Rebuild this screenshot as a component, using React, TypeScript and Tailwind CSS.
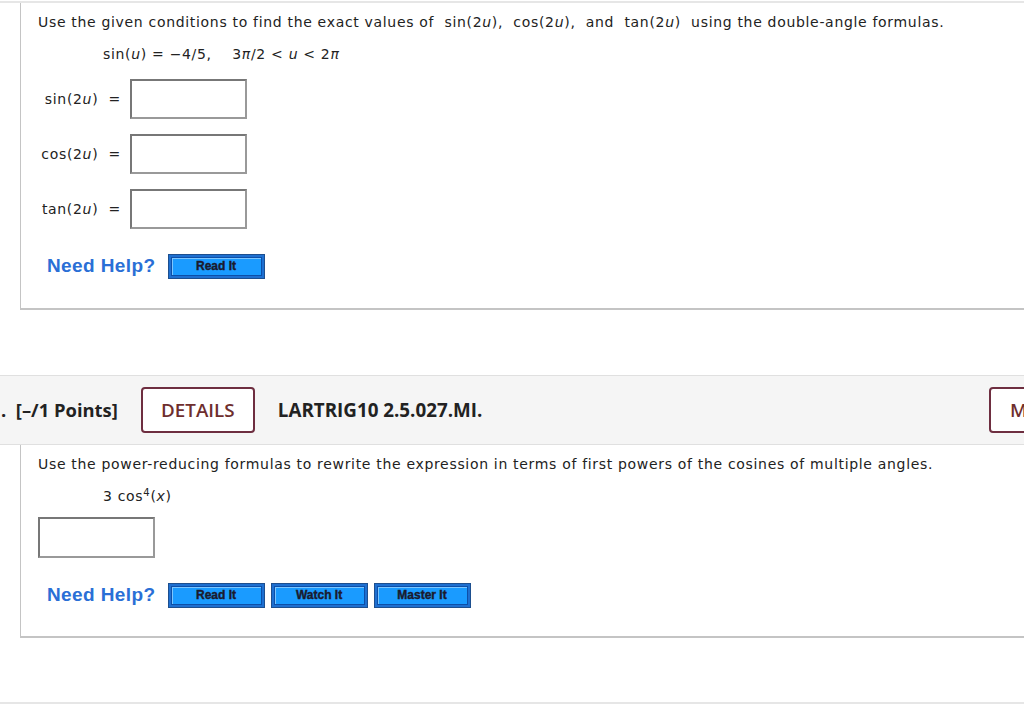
import React from "react";

const verdana = { fontFamily: '"DejaVu Sans", Verdana, sans-serif' };
const qText = "text-[14px] tracking-[0.68px] text-[#222]";

function HelpBtn({ label }: { label: string }) {
  return (
    <div className="h-[25px] w-[97px] border border-[#1d4f8f] bg-[#1e6fd0] p-[2px]">
      <div className="flex h-full w-full items-center justify-center border border-[#0d4fa8] bg-[#1a9bff] shadow-[inset_1px_1px_0_#7cc6ff]">
        <span
          className="text-[12px] font-bold leading-none text-[#1a1a2e]"
          style={{ fontFamily: '"Liberation Sans", Arial, sans-serif', WebkitTextStroke: "0.4px #1a1a2e" }}
        >
          {label}
        </span>
      </div>
    </div>
  );
}

function NeedHelp({ buttons }: { buttons: string[] }) {
  return (
    <div className="flex items-center">
      <span
        className="ml-[9px] text-[19px] font-bold tracking-[0.4px] text-[#2a6fd6]"
        style={{ fontFamily: '"Liberation Sans", Arial, sans-serif' }}
      >
        Need Help?
      </span>
      <div className="ml-[12px] flex gap-[6px]">
        {buttons.map((b) => (
          <HelpBtn key={b} label={b} />
        ))}
      </div>
    </div>
  );
}

function Row({ label }: { label: React.ReactNode }) {
  return (
    <div className="flex items-center">
      <div className={`w-[109px] pr-[9px] text-right ${qText}`}>{label}</div>
      <div className="h-[40px] w-[117px] border-2 border-[#777] border-r-[#999] border-b-[#999] bg-white" />
    </div>
  );
}

export default function App() {
  return (
    <div className="h-[707px] w-[1024px] overflow-hidden bg-white" style={verdana}>
      <div className="h-[3px] border-b-2 border-[#e6e6e6]" />
      <div className="ml-[20px] h-[307px] border-b-2 border-l border-[#c4c4c4] pl-[17px]">
        <div className={`pt-[9px] ${qText}`}>
          Use the given conditions to find the exact values of&nbsp; sin(2<i>u</i>),&nbsp; cos(2<i>u</i>),&nbsp; and&nbsp;
          tan(2<i>u</i>)&nbsp; using the double-angle formulas.
        </div>
        <div className={`mt-[11px] pl-[65px] ${qText}`}>
          sin(<i>u</i>) = −4/5, &nbsp;&nbsp; 3<i>π</i>/2 &lt; <i>u</i> &lt; 2<i>π</i>
        </div>
        <div className="-ml-[17px] mt-[14px] flex flex-col gap-[15px]">
          <Row label={<>sin(2<i>u</i>) &nbsp;=</>} />
          <Row label={<>cos(2<i>u</i>) &nbsp;=</>} />
          <Row label={<>tan(2<i>u</i>) &nbsp;=</>} />
        </div>
        <div className="mt-[23px]">
          <NeedHelp buttons={["Read It"]} />
        </div>
      </div>

      <div className="mt-[65px] flex h-[70px] items-center border-y border-[#e0e0e0] bg-[#f5f5f5]" style={{ fontFamily: '"Open Sans", sans-serif' }}>
        <span className="ml-[1px] text-[18.4px] font-bold text-[#222]">.&nbsp; [–/1 Points]</span>
        <div className="ml-[23px] flex h-[46px] w-[114px] items-center justify-center rounded-[4px] border-2 border-[#6e2e40] bg-white">
          <span className="text-[18.8px] font-semibold text-[#6e2e2e]">DETAILS</span>
        </div>
        <span className="ml-[23px] text-[18.8px] font-bold text-[#222]">LARTRIG10 2.5.027.MI.</span>
        <div className="ml-auto mr-[-20px] flex h-[46px] w-[55px] items-center justify-start rounded-[4px] border-2 border-[#6e2e40] bg-white pl-[19px]">
          <span className="text-[18.8px] font-semibold text-[#6e2e2e]">M</span>
        </div>
      </div>

      <div className="ml-[20px] h-[193px] border-b-2 border-l border-[#c4c4c4] pl-[17px]">
        <div className={`pt-[9px] ${qText}`}>
          Use the power-reducing formulas to rewrite the expression in terms of first powers of the cosines of multiple angles.
        </div>
        <div className={`mt-[11px] pl-[65px] ${qText}`}>
          3 cos<sup className="text-[10px]">4</sup>(<i>x</i>)
        </div>
        <div className="mt-[10px] h-[41px] w-[117px] border-2 border-[#777] border-r-[#999] border-b-[#999] bg-white" />
        <div className="mt-[23px]">
          <NeedHelp buttons={["Read It", "Watch It", "Master It"]} />
        </div>
      </div>

      <div className="mt-[64px] h-[3px] border-t-2 border-[#e6e6e6]" />
    </div>
  );
}
